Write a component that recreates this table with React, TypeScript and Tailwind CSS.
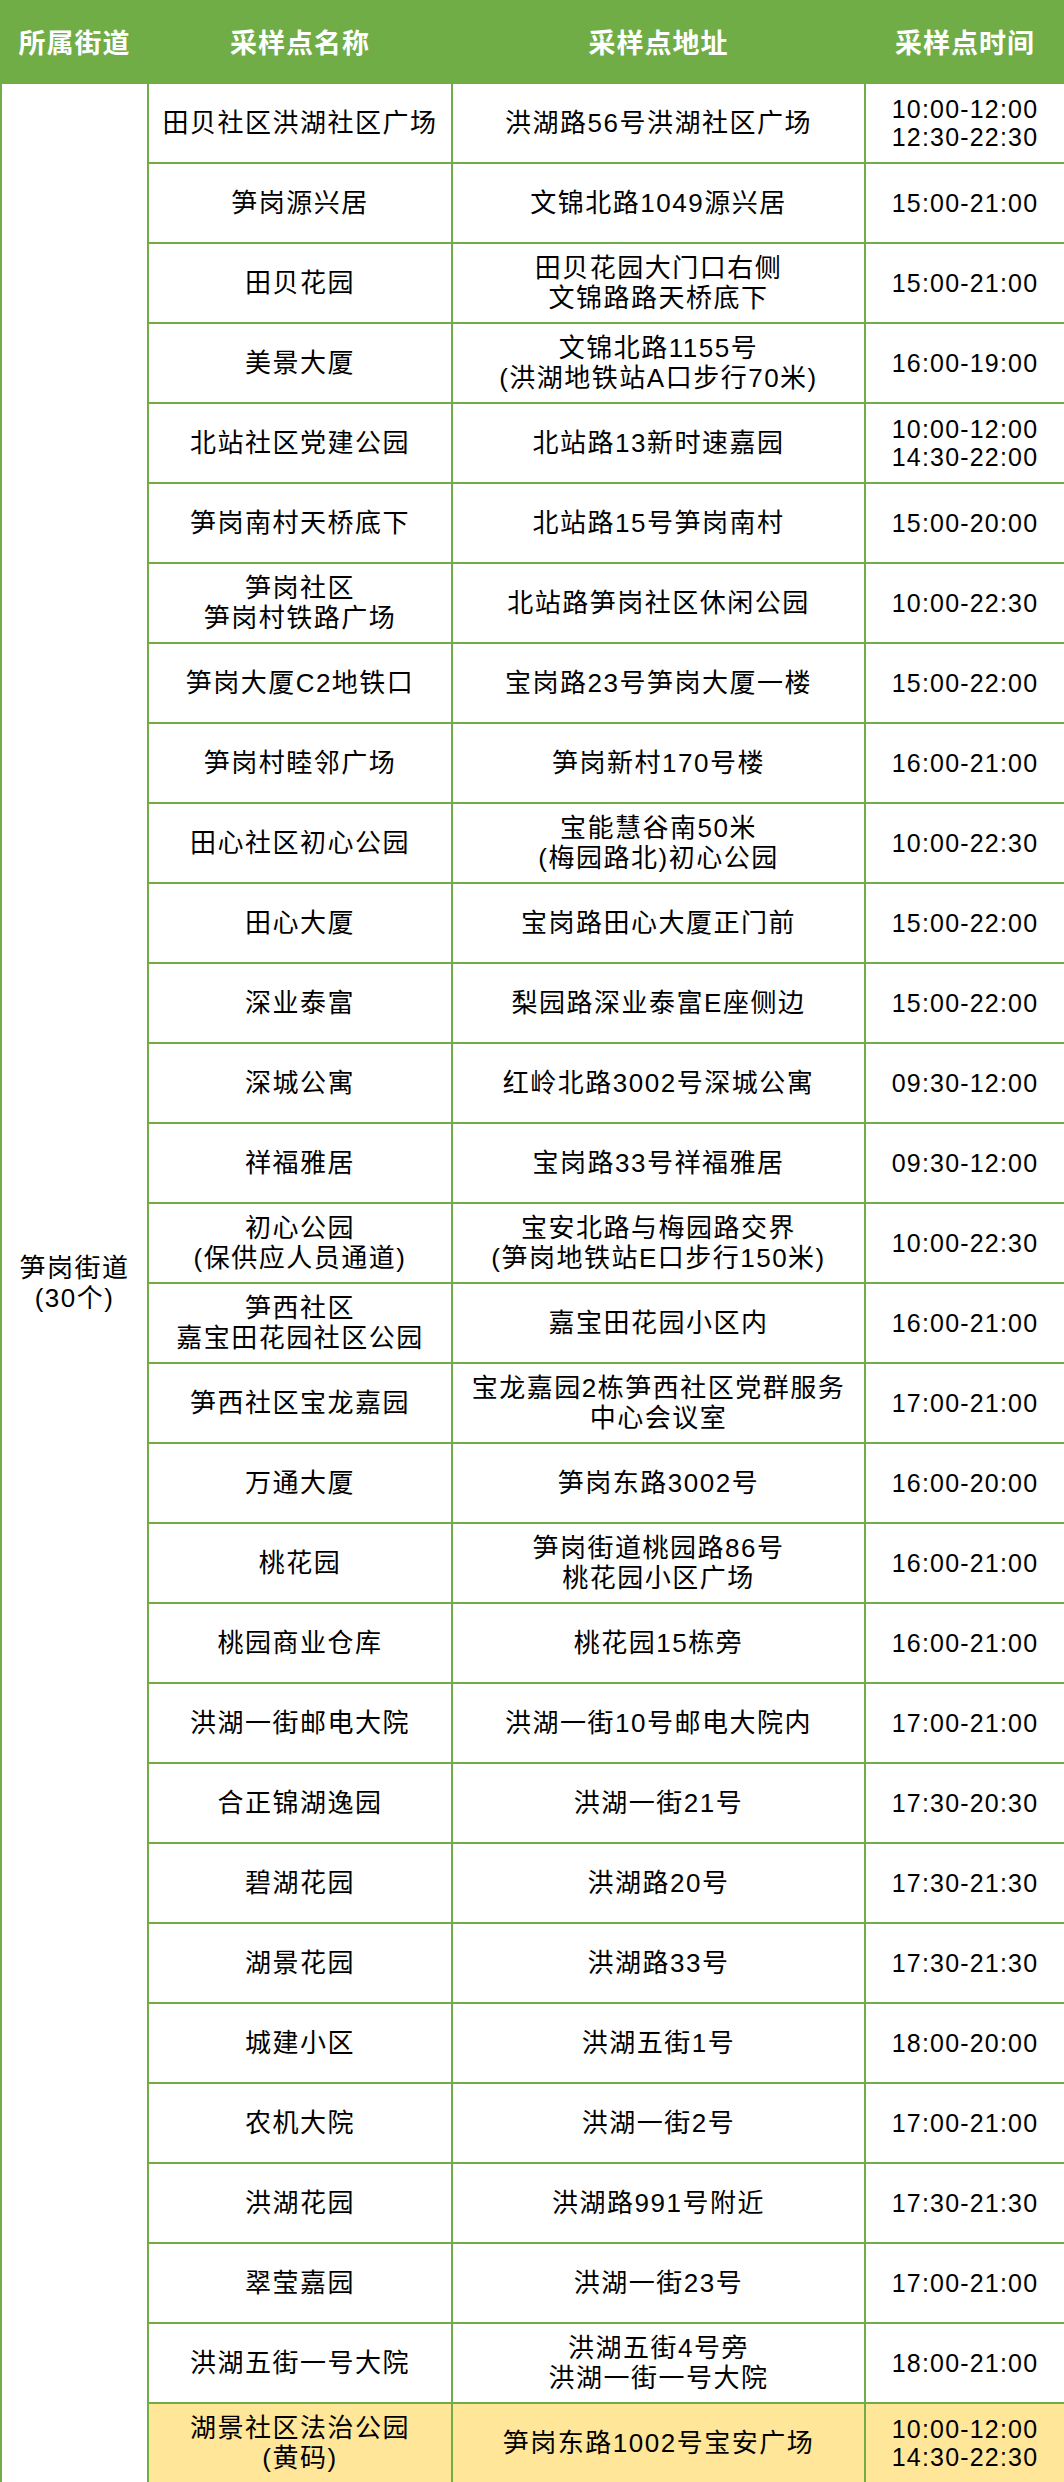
import React from 'react';

type Row = { name: string[]; addr: string[]; time: string[]; highlight?: boolean };

const rows: Row[] = [
  { name: ['田贝社区洪湖社区广场'], addr: ['洪湖路56号洪湖社区广场'], time: ['10:00-12:00', '12:30-22:30'] },
  { name: ['笋岗源兴居'], addr: ['文锦北路1049源兴居'], time: ['15:00-21:00'] },
  { name: ['田贝花园'], addr: ['田贝花园大门口右侧', '文锦路路天桥底下'], time: ['15:00-21:00'] },
  { name: ['美景大厦'], addr: ['文锦北路1155号', '(洪湖地铁站A口步行70米)'], time: ['16:00-19:00'] },
  { name: ['北站社区党建公园'], addr: ['北站路13新时速嘉园'], time: ['10:00-12:00', '14:30-22:00'] },
  { name: ['笋岗南村天桥底下'], addr: ['北站路15号笋岗南村'], time: ['15:00-20:00'] },
  { name: ['笋岗社区', '笋岗村铁路广场'], addr: ['北站路笋岗社区休闲公园'], time: ['10:00-22:30'] },
  { name: ['笋岗大厦C2地铁口'], addr: ['宝岗路23号笋岗大厦一楼'], time: ['15:00-22:00'] },
  { name: ['笋岗村睦邻广场'], addr: ['笋岗新村170号楼'], time: ['16:00-21:00'] },
  { name: ['田心社区初心公园'], addr: ['宝能慧谷南50米', '(梅园路北)初心公园'], time: ['10:00-22:30'] },
  { name: ['田心大厦'], addr: ['宝岗路田心大厦正门前'], time: ['15:00-22:00'] },
  { name: ['深业泰富'], addr: ['梨园路深业泰富E座侧边'], time: ['15:00-22:00'] },
  { name: ['深城公寓'], addr: ['红岭北路3002号深城公寓'], time: ['09:30-12:00'] },
  { name: ['祥福雅居'], addr: ['宝岗路33号祥福雅居'], time: ['09:30-12:00'] },
  { name: ['初心公园', '(保供应人员通道)'], addr: ['宝安北路与梅园路交界', '(笋岗地铁站E口步行150米)'], time: ['10:00-22:30'] },
  { name: ['笋西社区', '嘉宝田花园社区公园'], addr: ['嘉宝田花园小区内'], time: ['16:00-21:00'] },
  { name: ['笋西社区宝龙嘉园'], addr: ['宝龙嘉园2栋笋西社区党群服务', '中心会议室'], time: ['17:00-21:00'] },
  { name: ['万通大厦'], addr: ['笋岗东路3002号'], time: ['16:00-20:00'] },
  { name: ['桃花园'], addr: ['笋岗街道桃园路86号', '桃花园小区广场'], time: ['16:00-21:00'] },
  { name: ['桃园商业仓库'], addr: ['桃花园15栋旁'], time: ['16:00-21:00'] },
  { name: ['洪湖一街邮电大院'], addr: ['洪湖一街10号邮电大院内'], time: ['17:00-21:00'] },
  { name: ['合正锦湖逸园'], addr: ['洪湖一街21号'], time: ['17:30-20:30'] },
  { name: ['碧湖花园'], addr: ['洪湖路20号'], time: ['17:30-21:30'] },
  { name: ['湖景花园'], addr: ['洪湖路33号'], time: ['17:30-21:30'] },
  { name: ['城建小区'], addr: ['洪湖五街1号'], time: ['18:00-20:00'] },
  { name: ['农机大院'], addr: ['洪湖一街2号'], time: ['17:00-21:00'] },
  { name: ['洪湖花园'], addr: ['洪湖路991号附近'], time: ['17:30-21:30'] },
  { name: ['翠莹嘉园'], addr: ['洪湖一街23号'], time: ['17:00-21:00'] },
  { name: ['洪湖五街一号大院'], addr: ['洪湖五街4号旁', '洪湖一街一号大院'], time: ['18:00-21:00'] },
  { name: ['湖景社区法治公园', '(黄码)'], addr: ['笋岗东路1002号宝安广场'], time: ['10:00-12:00', '14:30-22:30'], highlight: true },
];

function Lines({ lines }: { lines: string[] }) {
  return (
    <>
      {lines.map((l, i) => (
        <div key={i} className="whitespace-nowrap">{l}</div>
      ))}
    </>
  );
}

export default function App() {
  return (
    <div className="w-[1064px] bg-white font-['Liberation_Sans','Noto_Sans_CJK_SC',sans-serif] text-black">
      <table className="w-[1064px] table-fixed border-collapse">
        <colgroup>
          <col className="w-[147px]" />
          <col className="w-[304px]" />
          <col className="w-[413px]" />
          <col className="w-[200px]" />
        </colgroup>
        <thead>
          <tr className="h-[82px] bg-[#70ad47] text-white">
            <th className="border-2 border-[#70ad47] pt-1 text-[27px] font-bold tracking-[1px]">所属街道</th>
            <th className="border-2 border-[#70ad47] pt-1 text-[27px] font-bold tracking-[1px]">采样点名称</th>
            <th className="border-2 border-[#70ad47] pt-1 text-[27px] font-bold tracking-[1px]">采样点地址</th>
            <th className="border-2 border-[#70ad47] pt-1 text-[27px] font-bold tracking-[1px]">采样点时间</th>
          </tr>
        </thead>
        <tbody>
          {rows.map((r, i) => (
            <tr key={i} className="h-[80px]">
              {i === 0 && (
                <td rowSpan={rows.length} className="border-2 border-[#70ad47] text-center align-middle text-[26px] leading-[30px] tracking-[1.5px]">
                  <div>笋岗街道</div>
                  <div>(30个)</div>
                </td>
              )}
              <td className={`border-2 border-[#70ad47] text-center align-middle text-[26px] leading-[30px] tracking-[1.5px] ${r.highlight ? 'bg-[#ffe699]' : ''}`}>
                <Lines lines={r.name} />
              </td>
              <td className={`border-2 border-[#70ad47] text-center align-middle text-[26px] leading-[30px] tracking-[1.5px] ${r.highlight ? 'bg-[#ffe699]' : ''}`}>
                <Lines lines={r.addr} />
              </td>
              <td className={`border-2 border-[#70ad47] text-center align-middle text-[25px] leading-[28px] tracking-[1.2px] ${r.highlight ? 'bg-[#ffe699]' : ''}`}>
                <Lines lines={r.time} />
              </td>
            </tr>
          ))}
        </tbody>
      </table>
    </div>
  );
}
